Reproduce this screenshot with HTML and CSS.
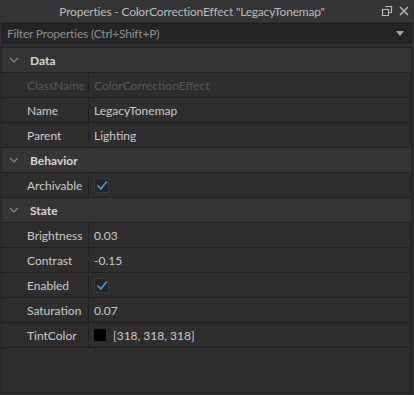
FILE: index.html
```html
<!DOCTYPE html>
<html>
<head>
<meta charset="utf-8">
<link rel="stylesheet" href="styles.css">
</head>
<body>
<div class="panel">
  <div class="titlebar">
    <span class="title">Properties - ColorCorrectionEffect "LegacyTonemap"</span>
    <span class="title-icons">
      <svg width="12" height="12" viewBox="0 0 12 12"><path d="M4.5 1.5h6v6h-2M1.5 4.5h6v6h-6z" fill="none" stroke="#bdbdbd" stroke-width="1.2"/></svg>
      <svg width="12" height="12" viewBox="0 0 12 12"><path d="M2 2l8 8M10 2l-8 8" stroke="#bdbdbd" stroke-width="1.4"/></svg>
    </span>
  </div>
  <div class="filter">
    <span class="filter-text">Filter Properties (Ctrl+Shift+P)</span>
    <svg width="8" height="5" viewBox="0 0 8 5"><path d="M0 0h8L4 5z" fill="#a8a8a8"/></svg>
  </div>
  <div class="list">
    <div class="group">
      <svg class="chev" width="10" height="6" viewBox="0 0 10 6"><path d="M1 1l4 4 4-4" fill="none" stroke="#8a8a8a" stroke-width="1.2"/></svg>
      <span>Data</span>
    </div>
    <div class="row"><div class="name dim">ClassName</div><div class="val dim">ColorCorrectionEffect</div></div>
    <div class="row"><div class="name">Name</div><div class="val">LegacyTonemap</div></div>
    <div class="row"><div class="name">Parent</div><div class="val">Lighting</div></div>
    <div class="group">
      <svg class="chev" width="10" height="6" viewBox="0 0 10 6"><path d="M1 1l4 4 4-4" fill="none" stroke="#8a8a8a" stroke-width="1.2"/></svg>
      <span>Behavior</span>
    </div>
    <div class="row"><div class="name">Archivable</div><div class="val"><span class="check"><svg width="12" height="11" viewBox="0 0 12 11"><path d="M1.5 5.5l3.3 3.5L10.8 1.5" fill="none" stroke="#3aa3ea" stroke-width="1.7"/></svg></span></div></div>
    <div class="group">
      <svg class="chev" width="10" height="6" viewBox="0 0 10 6"><path d="M1 1l4 4 4-4" fill="none" stroke="#8a8a8a" stroke-width="1.2"/></svg>
      <span>State</span>
    </div>
    <div class="row"><div class="name">Brightness</div><div class="val">0.03</div></div>
    <div class="row"><div class="name">Contrast</div><div class="val">-0.15</div></div>
    <div class="row"><div class="name">Enabled</div><div class="val"><span class="check"><svg width="12" height="11" viewBox="0 0 12 11"><path d="M1.5 5.5l3.3 3.5L10.8 1.5" fill="none" stroke="#3aa3ea" stroke-width="1.7"/></svg></span></div></div>
    <div class="row"><div class="name">Saturation</div><div class="val">0.07</div></div>
    <div class="row"><div class="name">TintColor</div><div class="val"><span class="swatch"></span>[318, 318, 318]</div></div>
  </div>
</div>
</body>
</html>
```
FILE: styles.css
```css
html, body {
  margin: 0;
  padding: 0;
  background: #2e2e2e;
}
body {
  font-family: Lato, "Open Sans", sans-serif;
  font-size: 12px;
  color: #cccccc;
}
.panel {
  width: 414px;
  height: 395px;
  box-sizing: border-box;
  display: flex;
  flex-direction: column;
  background: #2e2e2e;
}
.titlebar {
  height: 22px;
  background: #353535;
  display: flex;
  align-items: center;
  justify-content: center;
  position: relative;
}
.title {
  color: #bdbdbd;
  font-size: 12px;
  letter-spacing: -0.2px;
  margin-left: -30px;
}
.title-icons {
  position: absolute;
  right: 4px;
  top: 5px;
  display: flex;
  gap: 5px;
}
.filter {
  margin: 1px 2px 0 2px;
  height: 20px;
  box-sizing: border-box;
  background: #252525;
  border: 1px solid #1d1d1d;
  display: flex;
  align-items: center;
  justify-content: space-between;
  padding: 0 7px 0 4px;
}
.filter-text {
  color: #8e8e8e;
  letter-spacing: -0.2px;
}
.list {
  flex: 1;
  margin: 4px 2px 2px 1px;
  border: 1px solid #232323;
  border-top-color: #222222;
}
.group {
  height: 25px;
  box-sizing: border-box;
  background: #353535;
  border-bottom: 1px solid #222222;
  display: flex;
  align-items: center;
  font-weight: bold;
  color: #d6d6d6;
}
.chev {
  margin: 0 11px 0 7px;
}
.row {
  height: 25px;
  box-sizing: border-box;
  border-bottom: 1px solid #222222;
  display: flex;
  align-items: center;
}
.name {
  width: 87px;
  height: 100%;
  box-sizing: border-box;
  padding-left: 25px;
  border-right: 1px solid #222222;
  display: flex;
  align-items: center;
}
.val {
  padding-left: 5px;
  display: flex;
  align-items: center;
}
.dim {
  color: #5a5a5a;
}
.check {
  width: 15px;
  height: 15px;
  box-sizing: border-box;
  background: #252525;
  border: 1px solid #3a3a3a;
  display: flex;
  align-items: center;
  justify-content: center;
}
.swatch {
  width: 12px;
  height: 12px;
  background: #000;
  margin-right: 7px;
}
```
